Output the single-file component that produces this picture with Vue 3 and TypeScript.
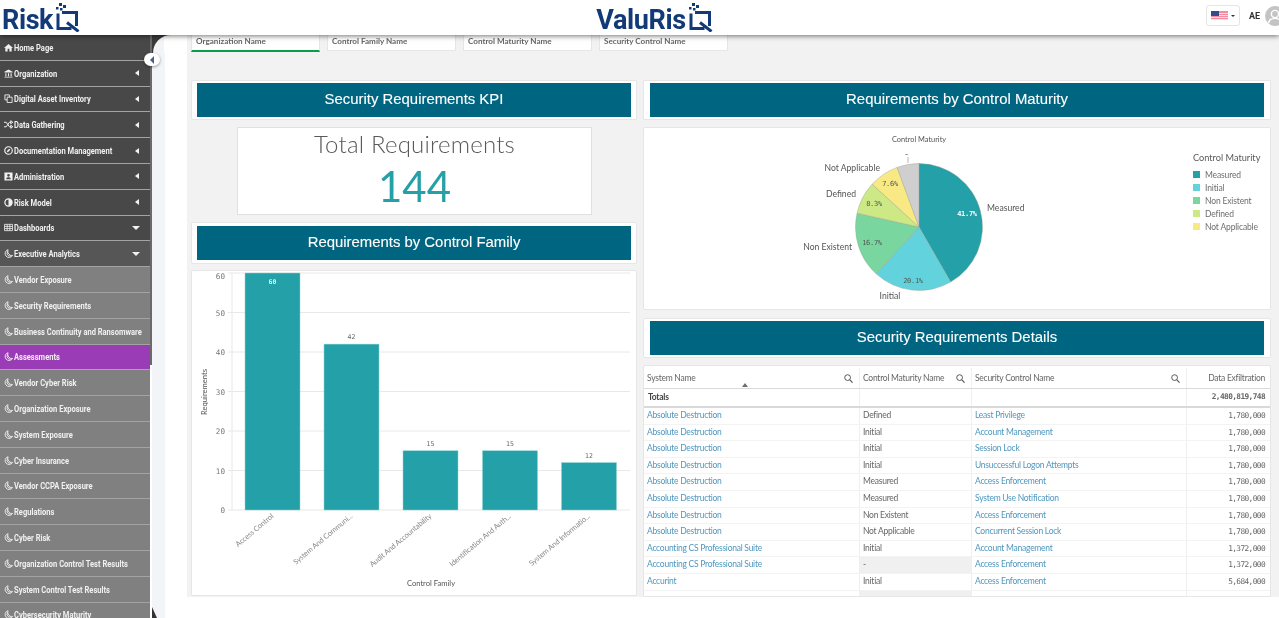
<script setup lang="ts">
type Icon = 'home' | 'bank' | 'copy' | 'shuffle' | 'compass' | 'user' | 'adjust' | 'table' | 'moon'
interface NavItem { label: string; icon: Icon; tone: 'dark' | 'mid' | 'light' | 'active'; caret?: 'left' | 'down' }

const nav: NavItem[] = [
  { label: 'Home Page', icon: 'home', tone: 'dark' },
  { label: 'Organization', icon: 'bank', tone: 'dark', caret: 'left' },
  { label: 'Digital Asset Inventory', icon: 'copy', tone: 'dark', caret: 'left' },
  { label: 'Data Gathering', icon: 'shuffle', tone: 'dark', caret: 'left' },
  { label: 'Documentation Management', icon: 'compass', tone: 'dark', caret: 'left' },
  { label: 'Administration', icon: 'user', tone: 'dark', caret: 'left' },
  { label: 'Risk Model', icon: 'adjust', tone: 'dark', caret: 'left' },
  { label: 'Dashboards', icon: 'table', tone: 'dark', caret: 'down' },
  { label: 'Executive Analytics', icon: 'moon', tone: 'mid', caret: 'down' },
  { label: 'Vendor Exposure', icon: 'moon', tone: 'light' },
  { label: 'Security Requirements', icon: 'moon', tone: 'light' },
  { label: 'Business Continuity and Ransomware', icon: 'moon', tone: 'light' },
  { label: 'Assessments', icon: 'moon', tone: 'active' },
  { label: 'Vendor Cyber Risk', icon: 'moon', tone: 'light' },
  { label: 'Organization Exposure', icon: 'moon', tone: 'light' },
  { label: 'System Exposure', icon: 'moon', tone: 'light' },
  { label: 'Cyber Insurance', icon: 'moon', tone: 'light' },
  { label: 'Vendor CCPA Exposure', icon: 'moon', tone: 'light' },
  { label: 'Regulations', icon: 'moon', tone: 'light' },
  { label: 'Cyber Risk', icon: 'moon', tone: 'light' },
  { label: 'Organization Control Test Results', icon: 'moon', tone: 'light' },
  { label: 'System Control Test Results', icon: 'moon', tone: 'light' },
  { label: 'Cybersecurity Maturity', icon: 'moon', tone: 'light' }
]

const filters = ['Organization Name', 'Control Family Name', 'Control Maturity Name', 'Security Control Name']

const ticks = [0, 10, 20, 30, 40, 50, 60]
const y0 = 239
const yScale = 3.95
const yOf = (v: number) => y0 - v * yScale
const tickY = (v: number) => (v === 60 ? 8 : yOf(v) + 3)
const bars = [
  { label: 'Access Control', value: 60, x: 53 },
  { label: 'System And Communi...', value: 42, x: 132 },
  { label: 'Audit And Accountability', value: 15, x: 211 },
  { label: 'Identification And Auth...', value: 15, x: 290.500 },
  { label: 'System And Informatio...', value: 12, x: 369.500 }
]

const slices = [
  { value: 41.7, color: '#24a0a8' },
  { value: 20.1, color: '#62d3dc' },
  { value: 16.7, color: '#79d69f' },
  { value: 8.3, color: '#cde985' },
  { value: 7.6, color: '#f9e984' },
  { value: 5.6, color: '#cfcfcf' }
]
const cx = 275
const cy = 99
const r = 63.5
function slicePaths() {
  let start = 0
  return slices.map((s) => {
    const a0 = (start / 100) * Math.PI * 2
    const a1 = ((start + s.value) / 100) * Math.PI * 2
    start += s.value
    const large = s.value > 50 ? 1 : 0
    const p0 = `${(cx + r * Math.sin(a0)).toFixed(2)} ${(cy - r * Math.cos(a0)).toFixed(2)}`
    const p1 = `${(cx + r * Math.sin(a1)).toFixed(2)} ${(cy - r * Math.cos(a1)).toFixed(2)}`
    return { d: `M${cx} ${cy}L${p0}A${r} ${r} 0 ${large} 1 ${p1}Z`, color: s.color }
  })
}
const pie = slicePaths()
const legend = [
  { label: 'Measured', color: '#24a0a8' },
  { label: 'Initial', color: '#62d3dc' },
  { label: 'Non Existent', color: '#79d69f' },
  { label: 'Defined', color: '#cde985' },
  { label: 'Not Applicable', color: '#f9e984' }
]

const rows = [
  ['Absolute Destruction', 'Defined', 'Least Privilege', '1,780,000'],
  ['Absolute Destruction', 'Initial', 'Account Management', '1,780,000'],
  ['Absolute Destruction', 'Initial', 'Session Lock', '1,780,000'],
  ['Absolute Destruction', 'Initial', 'Unsuccessful Logon Attempts', '1,780,000'],
  ['Absolute Destruction', 'Measured', 'Access Enforcement', '1,780,000'],
  ['Absolute Destruction', 'Measured', 'System Use Notification', '1,780,000'],
  ['Absolute Destruction', 'Non Existent', 'Access Enforcement', '1,780,000'],
  ['Absolute Destruction', 'Not Applicable', 'Concurrent Session Lock', '1,780,000'],
  ['Accounting CS Professional Suite', 'Initial', 'Account Management', '1,372,000'],
  ['Accounting CS Professional Suite', '-', 'Access Enforcement', '1,372,000'],
  ['Accurint', 'Initial', 'Access Enforcement', '5,684,000']
]
</script>

<template>
  <div class="page">
    <header class="topbar">
      <div class="logo logo-left">
        <span>Risk</span>
        <svg class="q" viewBox="0 0 25 29" width="25" height="29"><g fill="#123a78"><rect x="4" y="0" width="3" height="3"/><rect x="8" y="2" width="3" height="3"/><rect x="1" y="4" width="2.500" height="2.500"/><rect x="5" y="5" width="2.500" height="2.500"/></g><path d="M3 10.500V25.500H16.500M7 9.500H21.500V23" fill="none" stroke="#123a78" stroke-width="3"/><path d="M12 19.500L23.500 28.500" stroke="#123a78" stroke-width="3"/></svg>
      </div>
      <div class="logo logo-mid">
        <span>ValuRis</span>
        <svg class="q" viewBox="0 0 25 29" width="25" height="29"><g fill="#123a78"><rect x="4" y="0" width="3" height="3"/><rect x="8" y="2" width="3" height="3"/><rect x="1" y="4" width="2.500" height="2.500"/><rect x="5" y="5" width="2.500" height="2.500"/></g><path d="M3 10.500V25.500H16.500M7 9.500H21.500V23" fill="none" stroke="#123a78" stroke-width="3"/><path d="M12 19.500L23.500 28.500" stroke="#123a78" stroke-width="3"/></svg>
      </div>
      <div class="user">
        <button class="flag-btn">
          <svg width="17" height="9" viewBox="0 0 17 9"><rect width="17" height="9" fill="#f58ba0"/><rect y="2" width="17" height="1" fill="#fbd9df"/><rect y="4" width="17" height="1" fill="#fbd9df"/><rect y="6" width="17" height="1" fill="#fbd9df"/><rect y="8" width="17" height="1" fill="#fbd9df"/><rect width="8" height="5" fill="#2f4d86"/></svg>
          <i class="mini-caret"></i>
        </button>
        <b class="initials">AE</b>
        <svg class="avatar" width="20" height="20" viewBox="0 0 20 20"><circle cx="10" cy="10" r="10" fill="#c4c4c4"/><circle cx="10" cy="8" r="3.600" fill="none" stroke="#fff" stroke-width="1.400"/><path d="M3.500 17c1-4 4-4.600 6.500-4.600s5.500.6 6.500 4.600" fill="none" stroke="#fff" stroke-width="1.400"/></svg>
      </div>
    </header>

    <div class="body">
      <nav class="sidebar">
        <a v-for="item in nav" :key="item.label" class="nav-item" :class="item.tone">
          <svg class="nav-icon" viewBox="0 0 10 10" width="9" height="9">
            <path v-if="item.icon === 'home'" d="M5 1L0 5.500h1.500V9.500h2.500V6.500h2V9.500h2.500V5.500H10z" fill="currentColor"/>
            <path v-else-if="item.icon === 'bank'" d="M5 .5L.5 3v1h9V3zM1.500 4.800h1.200v3.200H1.500zM4.400 4.800h1.200v3.200H4.400zM7.300 4.800h1.200v3.200H7.300zM.5 8.500h9v1h-9z" fill="currentColor"/>
            <path v-else-if="item.icon === 'copy'" d="M1 1h5v2.500M3.500 3.500h5.500v6H3.500zM1 1v5.500h2.500" fill="none" stroke="currentColor" stroke-width="1"/>
            <path v-else-if="item.icon === 'shuffle'" d="M0 2.500h2.500l3.500 5h2M0 7.500h2.500l3.500-5h2M7.500 .8L9.800 2.500 7.500 4.200zM7.500 5.800L9.800 7.500 7.500 9.200z" fill="none" stroke="currentColor" stroke-width="1.100"/>
            <g v-else-if="item.icon === 'compass'"><circle cx="5" cy="5" r="4.200" fill="none" stroke="currentColor" stroke-width="1.300"/><path d="M7.200 2.800L5.800 5.800 2.800 7.200 4.200 4.200z" fill="currentColor"/></g>
            <path v-else-if="item.icon === 'user'" fill-rule="evenodd" d="M.5.5h9v9h-9zM5 2.200a1.500 1.500 0 100 3 1.500 1.500 0 000-3zM2.500 8h5c0-1.500-1-2.200-2.500-2.200S2.500 6.500 2.500 8z" fill="currentColor"/>
            <g v-else-if="item.icon === 'adjust'"><circle cx="5" cy="5" r="4" fill="none" stroke="currentColor" stroke-width="1.400"/><path d="M5 1a4 4 0 010 8z" fill="currentColor"/></g>
            <path v-else-if="item.icon === 'table'" d="M.5 1.500h9v7h-9zM.5 3.800h9M.5 6.200h9M3.500 1.500v7M6.500 1.500v7" fill="none" stroke="currentColor" stroke-width=".9"/>
            <path v-else d="M4.500.8A4.400 4.400 0 1 0 9.500 7.200 4.600 4.600 0 0 1 4.500.8zM4 2.800A3.300 3.300 0 0 0 7.500 7.900" fill="none" stroke="currentColor" stroke-width="1"/>
          </svg>
          <span class="nav-label">{{ item.label }}</span>
          <i v-if="item.caret" class="caret" :class="item.caret"></i>
        </a>
      </nav>

      <div class="gutter">
        <span class="thumb"></span>
        <span class="corner"></span>
        <span class="corner-bottom"></span>
        <button class="collapse"><i></i></button>
      </div>

      <main class="shell">
        <div class="canvas">
          <div class="filters">
            <div v-for="(f, i) in filters" :key="f" class="filter" :class="{ selected: i === 0 }">{{ f }}</div>
          </div>

          <div class="dashboard">
            <section class="col left-col">
              <div class="title-panel h40"><h2>Security Requirements KPI</h2></div>
              <div class="kpi">
                <div class="kpi-title">Total Requirements</div>
                <div class="kpi-value">144</div>
              </div>
              <div class="title-panel h42"><h2>Requirements by Control Family</h2></div>
              <div class="card chart-card">
                <svg class="chart" width="444" height="324" viewBox="0 0 444 324">
                  <g v-for="t in ticks" :key="t">
                    <line x1="36" :x2="438" :y1="yOf(t)" :y2="yOf(t)" class="grid" />
                    <text x="33" :y="tickY(t)" class="tick" text-anchor="end">{{ t }}</text>
                  </g>
                  <line x1="40" x2="40" y1="2" y2="239" class="grid" />
                  <text transform="translate(15 121) rotate(-90)" text-anchor="middle" class="axis">Requirements</text>
                  <g v-for="b in bars" :key="b.label">
                    <rect :x="b.x" :y="yOf(b.value)" width="55" :height="y0 - yOf(b.value)" fill="#24a0a8" stroke="#8fd3d6" stroke-width=".5" />
                    <text :x="b.x + 27.500" :y="b.value === 60 ? 13 : yOf(b.value) - 5" text-anchor="middle" class="tick val" :class="{ inside: b.value === 60 }">{{ b.value }}</text>
                    <text :transform="`translate(${b.x + 29} 246) rotate(-40)`" text-anchor="end" class="cat">{{ b.label }}</text>
                  </g>
                  <text x="239" y="315" text-anchor="middle" class="axis">Control Family</text>
                </svg>
              </div>
            </section>

            <section class="col right-col">
              <div class="title-panel h40"><h2>Requirements by Control Maturity</h2></div>
              <div class="card pie-card">
                <svg class="pie" width="626" height="181" viewBox="0 0 626 181">
                  <text x="275" y="14" text-anchor="middle" class="pie-title">Control Maturity</text>
                  <path v-for="p in pie" :key="p.color" :d="p.d" :fill="p.color" stroke="#9aa08c" stroke-width=".4" />
                  <text x="323" y="88" text-anchor="middle" class="pct white">41.7%</text>
                  <text x="269" y="155" text-anchor="middle" class="pct">20.1%</text>
                  <text x="228" y="117" text-anchor="middle" class="pct">16.7%</text>
                  <text x="230" y="78" text-anchor="middle" class="pct">8.3%</text>
                  <text x="246" y="58" text-anchor="middle" class="pct">7.6%</text>
                  <text x="343" y="83" class="plabel">Measured</text>
                  <text x="246" y="171" text-anchor="middle" class="plabel">Initial</text>
                  <text x="208" y="122" text-anchor="end" class="plabel">Non Existent</text>
                  <text x="212" y="69" text-anchor="end" class="plabel">Defined</text>
                  <text x="236" y="43" text-anchor="end" class="plabel">Not Applicable</text>
                  <text x="261" y="29" class="plabel">-</text>
                  <line x1="264" x2="264" y1="29" y2="35" stroke="#888" stroke-width=".6" />
                </svg>
                <div class="legend">
                  <div class="legend-title">Control Maturity</div>
                  <div v-for="l in legend" :key="l.label" class="legend-row">
                    <i :style="{ background: l.color }"></i><span>{{ l.label }}</span>
                  </div>
                </div>
              </div>
              <div class="title-panel h40"><h2>Security Requirements Details</h2></div>
              <div class="card table-card">
                <div class="t-row t-head">
                  <div class="c c1">System Name<span class="sort"></span><svg class="search" width="9" height="9" viewBox="0 0 10 10"><circle cx="4" cy="4" r="3.200" fill="none" stroke="#555" stroke-width="1.100"/><path d="M6.500 6.500L9.500 9.500" stroke="#555" stroke-width="1.300"/></svg></div>
                  <div class="c c2">Control Maturity Name<svg class="search" width="9" height="9" viewBox="0 0 10 10"><circle cx="4" cy="4" r="3.200" fill="none" stroke="#555" stroke-width="1.100"/><path d="M6.500 6.500L9.500 9.500" stroke="#555" stroke-width="1.300"/></svg></div>
                  <div class="c c3">Security Control Name<svg class="search" width="9" height="9" viewBox="0 0 10 10"><circle cx="4" cy="4" r="3.200" fill="none" stroke="#555" stroke-width="1.100"/><path d="M6.500 6.500L9.500 9.500" stroke="#555" stroke-width="1.300"/></svg></div>
                  <div class="c c4 num-head">Data Exfiltration</div>
                </div>
                <div class="t-row t-total">
                  <div class="c c1"><b>Totals</b></div>
                  <div class="c c2"></div>
                  <div class="c c3"></div>
                  <div class="c c4 num"><b>2,480,819,748</b></div>
                </div>
                <div v-for="(r, i) in rows" :key="i" class="t-row t-data">
                  <div class="c c1 link">{{ r[0] }}</div>
                  <div class="c c2" :class="{ nullv: r[1] === '-' }">{{ r[1] }}</div>
                  <div class="c c3 link">{{ r[2] }}</div>
                  <div class="c c4 num">{{ r[3] }}</div>
                </div>
                <div class="t-row t-partial">
                  <div class="c c1"></div><div class="c c2 nullv"></div><div class="c c3"></div><div class="c c4"></div>
                </div>
              </div>
            </section>
          </div>
        </div>
      </main>
    </div>
  </div>
</template>

<style>
html, body { margin: 0; padding: 0; background: #fff; overflow: hidden; }
</style>

<style scoped>
.page { width: 1279px; height: 618px; overflow: hidden; display: flex; flex-direction: column; font-family: Lato, "Open Sans", sans-serif; color: #595959; background: #fff; filter: blur(.25px); }
.topbar { position: relative; z-index: 3; flex: 0 0 35px; height: 35px; background: #fff; box-shadow: 0 1px 5px rgba(0,0,0,.55); display: grid; grid-template-columns: 1fr auto 1fr; align-items: start; }
.logo { display: flex; align-items: flex-start; color: #123a78; font-family: Roboto, sans-serif; font-weight: 700; line-height: 1; }
.logo span { font-size: 27px; letter-spacing: -.4px; margin-top: 7px; }
.logo .q { margin-top: 3px; margin-left: 2px; }
.logo-left { padding-left: 2px; }
.logo-mid { transform: translateX(15px); }
.user { justify-self: end; display: flex; align-items: center; margin-top: 5px; margin-right: -6px; }
.flag-btn { width: 34px; height: 21px; border: 1px solid #e5e5e5; border-radius: 3px; background: #fff; display: flex; align-items: center; padding: 0 0 0 4px; gap: 3px; box-sizing: border-box; transform: translateX(1px); }
.mini-caret { border-top: 2.500px solid #333; border-left: 2.500px solid transparent; border-right: 2.500px solid transparent; }
.initials { margin-left: 10px; font: 700 9px Roboto, sans-serif; color: #333; }
.avatar { margin-left: 5px; }

.body { flex: 1; display: flex; min-height: 0; }
.sidebar { flex: 0 0 150px; width: 150px; overflow: hidden; background: #808080; }
.nav-item { display: flex; align-items: center; box-sizing: border-box; height: 25.800px; padding-left: 4px; border-bottom: 1.500px solid #a3a3a3; color: #f0f0f0; font: 700 9.200px Roboto, sans-serif; }
.nav-item.dark { background: #484848; }
.nav-item.mid { background: #565656; }
.nav-item.light { background: #808080; }
.nav-item.active { background: #9b3cb7; border-bottom-color: #b5a0bb; }
.nav-icon { flex: none; margin-right: 1px; }
.nav-label { flex: 1; white-space: nowrap; transform: scaleX(.82); transform-origin: left center; }
.caret { flex: none; display: block; }
.caret.left { border-right: 4px solid #f2f2f2; border-top: 3px solid transparent; border-bottom: 3px solid transparent; margin-right: 11px; }
.caret.down { border-top: 4px solid #f2f2f2; border-left: 4px solid transparent; border-right: 4px solid transparent; margin-right: 10px; }

.gutter { position: relative; flex: 0 0 15px; background: linear-gradient(90deg, #fff 0 2px, #f3f4f8 2px); }
.thumb { position: absolute; left: 0; top: 0; width: 2px; height: 330px; background: #6a6a6a; }
.corner { position: absolute; left: 2px; top: 0; width: 28px; height: 18px; background: #fff; z-index: 1; }
.corner::before { content: ""; position: absolute; inset: 0; background: #3a3a3a; }
.corner::after { content: ""; position: absolute; inset: 0 0 0 1px; background: linear-gradient(90deg, #f3f4f8 0 11px, #fff 11px); border-top-left-radius: 20px; }
.corner-bottom { position: absolute; left: 2px; bottom: 0; width: 5px; height: 11px; background: #333; clip-path: polygon(0 0, 100% 100%, 0 100%); }
.collapse { position: absolute; z-index: 4; left: -6px; top: 18px; width: 16px; height: 13px; border: 0; padding: 0; border-radius: 7px; background: #fff; box-shadow: 0 1px 3px rgba(0,0,0,.4); display: flex; align-items: center; justify-content: center; }
.collapse i { border-right: 4px solid #4d5e8e; border-top: 4px solid transparent; border-bottom: 4px solid transparent; }

.shell { flex: 1; min-width: 0; background: #fff; padding-left: 22px; }
.canvas { background: #f2f2f2; height: 562px; padding-left: 4px; box-sizing: border-box; position: relative; }
.filters { display: flex; gap: 7px; height: 17px; }
.filter { width: 129px; height: 16px; background: #fff; border: 1px solid #e6e6e6; border-top: 0; box-sizing: border-box; padding: 0 0 0 4px; font-weight: 700; font-size: 8.100px; line-height: 13px; color: #666; white-space: nowrap; }
.filter.selected { height: 17px; border-bottom: 2px solid #0f9b4d; }

.dashboard { display: grid; grid-template-columns: 446px 628px; gap: 6px; padding-top: 28px; }
.col { display: flex; flex-direction: column; min-width: 0; }
.left-col { gap: 7px; }
.right-col { gap: 7px; }
.title-panel { background: #fff; border: 1px solid #e6e6e6; border-radius: 2px; box-sizing: border-box; padding: 2px 5px 2px 5px; display: flex; }
.right-col .title-panel { padding-left: 6px; padding-right: 6px; }
.title-panel h2 { flex: 1; margin: 0; background: #006580; color: #fff; font: 400 14.900px/33px "Liberation Sans", Arial, sans-serif; text-align: center; -webkit-text-stroke: .1px #fff; }
.h40 { height: 40px; }
.h42 { height: 42px; padding: 3px 5px; margin-bottom: -1px; }
.card { background: #fff; border: 1px solid #e6e6e6; border-radius: 2px; box-sizing: border-box; }

.kpi { width: 355px; height: 88px; align-self: center; background: #fff; border: 1px solid #e0e0e0; box-sizing: border-box; text-align: center; margin-left: 1px; }
.kpi-title { font-weight: 300; font-size: 24px; line-height: 31px; color: #595959; letter-spacing: .2px; }
.kpi-value { font-weight: 400; font-size: 42px; line-height: 54px; color: #26a0a7; }

.chart-card { height: 326px; }
.chart { display: block; }
.grid { stroke: #e8e8e8; stroke-width: 1; }
.tick { font: 7.600px "DejaVu Sans Mono", monospace; fill: #777; }
.val { fill: #666; font-size: 6.500px; }
.inside { fill: #e4f5f5; font-weight: 700; }
.axis { font: 7.600px Lato, sans-serif; fill: #555; }
.cat { font: 7.400px Lato, sans-serif; fill: #8a8a8a; letter-spacing: -.1px; }

.pie-card { position: relative; height: 183px; margin-bottom: 1px; }
.pie { display: block; }
.pie-title { font: 7.400px Lato, sans-serif; fill: #555; }
.pct { font: 7px "DejaVu Sans Mono", monospace; fill: #4d5b52; letter-spacing: -.3px; }
.white { fill: #fff; font-weight: 700; }
.plabel { font: 8.600px Lato, sans-serif; fill: #555; }
.legend { position: absolute; left: 549px; top: 23px; }
.legend-title { font-size: 9.200px; line-height: 14px; color: #595959; margin-bottom: 3px; }
.legend-row { display: flex; align-items: center; gap: 5px; height: 13px; font-size: 8.500px; color: #6e6e6e; letter-spacing: -.15px; }
.legend-row i { width: 7px; height: 7px; display: block; }

.table-card { height: 232px; overflow: hidden; padding-top: 2px; }
.t-row { display: grid; grid-template-columns: 216px 112px 215px 83px; }
.c { position: relative; box-sizing: border-box; padding: 0 3px; white-space: nowrap; overflow: hidden; border-right: 1px solid #efefef; font-size: 8.500px; letter-spacing: -.25px; color: #666; }
.c4 { border-right: 0; }
.t-head { height: 20px; border-bottom: 1px solid #d9d9d9; }
.t-head .c { line-height: 20px; color: #666; }
.num-head { text-align: right; padding-right: 5px; }
.search { position: absolute; right: 6px; top: 6px; }
.sort { position: absolute; left: 98px; bottom: 1px; border-bottom: 4px solid #6e6e6e; border-left: 3px solid transparent; border-right: 3px solid transparent; }
.t-total { height: 19px; border-bottom: 2px solid #d9d9d9; box-sizing: border-box; }
.t-total .c { line-height: 17px; color: #444; }
.t-total .c1 { padding-left: 4px; }
.t-data { height: 16.600px; border-bottom: 1px solid #f3f3f3; box-sizing: border-box; }
.t-data .c { line-height: 15.500px; }
.link { color: #4f97bf !important; }
.t-data .num, .t-total .num { text-align: right; padding-right: 5px; font: 7.800px/16px "DejaVu Sans Mono", monospace; letter-spacing: -.6px; color: #666; }
.nullv { background: #f0f0f0; }
.t-partial { height: 6px; }
</style>
